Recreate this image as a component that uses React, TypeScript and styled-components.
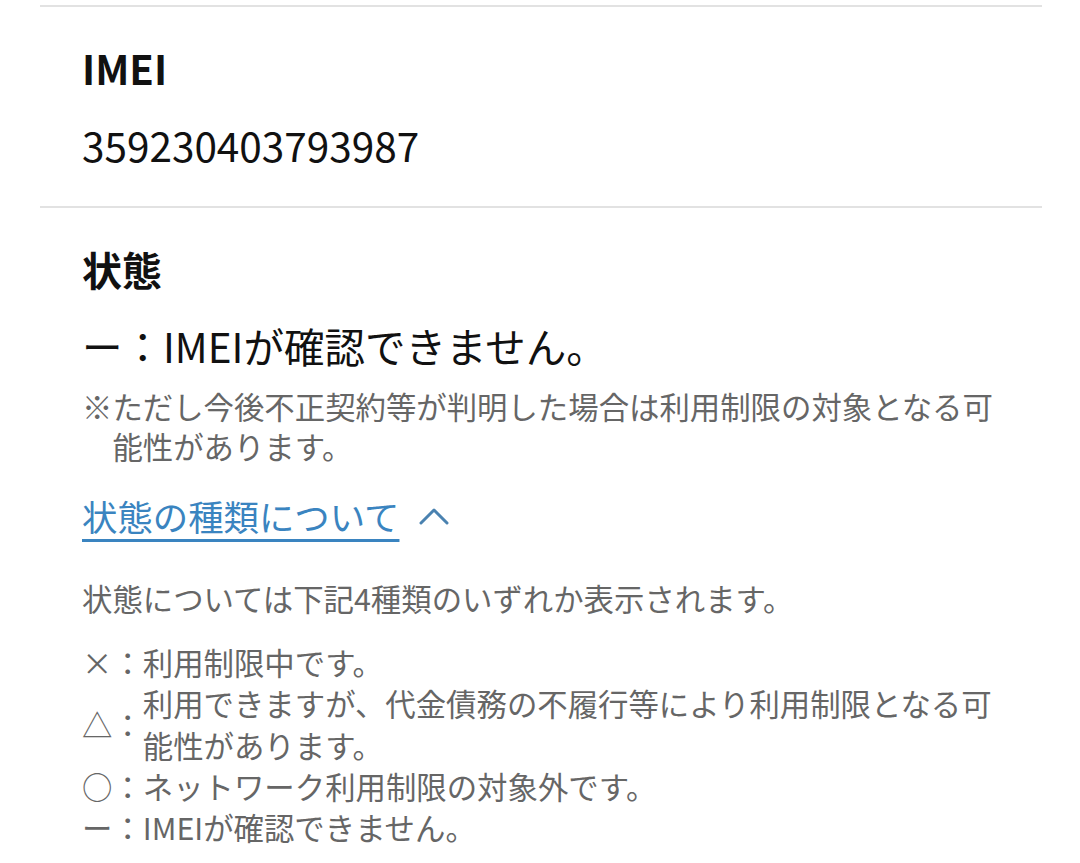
import styled, { createGlobalStyle } from "styled-components"

const GlobalStyle = createGlobalStyle`
  html, body {
    margin: 0;
    padding: 0;
    background: #ffffff;
  }
  body {
    font-family: "Noto Sans CJK JP", "Noto Sans", sans-serif;
    color: #111111;
  }
`

const statusTypes = [
  { mark: "×：", text: "利用制限中です。" },
  { mark: "△：", text: "利用できますが、代金債務の不履行等により利用制限となる可能性があります。" },
  { mark: "○：", text: "ネットワーク利用制限の対象外です。" },
  { mark: "ー：", text: "IMEIが確認できません。" },
]

const App = () => {
  return <>
    <GlobalStyle />
    <Page>
      <Section>
        <Heading>IMEI</Heading>
        <Value>359230403793987</Value>
      </Section>
      <Section>
        <Heading>状態</Heading>
        <Value>ー：IMEIが確認できません。</Value>
        <Note>※ただし今後不正契約等が判明した場合は利用制限の対象となる可能性があります。</Note>
        <Toggle>
          <LinkText>状態の種類について</LinkText>
          <svg width="30" height="18" viewBox="0 0 30 18" fill="none">
            <polyline points="2,16 15,3 28,16" stroke="#4a82b0" strokeWidth="3" strokeLinecap="round" strokeLinejoin="round" />
          </svg>
        </Toggle>
        <Description>状態については下記4種類のいずれか表示されます。</Description>
        <TypeList>
          {statusTypes.map((t) => (
            <TypeItem key={t.mark}>
              <Mark>{t.mark}</Mark>
              <TypeText>{t.text}</TypeText>
            </TypeItem>
          ))}
        </TypeList>
      </Section>
    </Page>
  </>
}

const Page = styled.div`
  padding: 5px 38px 0 40px;
`

const Section = styled.section`
  border-top: 2px solid #e2e2e2;
  padding: 33px 42px 33px 42px;
  display: flex;
  flex-direction: column;
`

const Heading = styled.h2`
  margin: 0;
  font-size: 40px;
  line-height: 56px;
  font-weight: 700;
  color: #111111;
`

const Value = styled.p`
  margin: 21px 0 0;
  font-size: 40.5px;
  line-height: 56px;
  font-weight: 400;
  color: #111111;
`

const Note = styled.p`
  margin: 12px 0 0;
  font-size: 30.4px;
  line-height: 40px;
  color: #666666;
  padding-left: 1em;
  text-indent: -1em;
`

const Toggle = styled.div`
  margin-top: 25px;
  display: flex;
  align-items: center;
  gap: 20px;
  height: 50px;
`

const LinkText = styled.a`
  font-size: 35.4px;
  line-height: 50px;
  color: #3a84c0;
  text-decoration: underline;
  text-decoration-thickness: 3px;
  text-underline-offset: 8px;
  cursor: pointer;
`

const Description = styled.p`
  margin: 37px 0 0;
  font-size: 30.4px;
  line-height: 40px;
  color: #666666;
`

const TypeList = styled.ul`
  list-style: none;
  margin: 24px 0 0;
  padding: 0;
`

const TypeItem = styled.li`
  display: flex;
  align-items: center;
  font-size: 30.4px;
  line-height: 41.25px;
  color: #666666;
`

const Mark = styled.span`
  flex: 0 0 2em;
`

const TypeText = styled.span`
  flex: 1;
`

export default App
